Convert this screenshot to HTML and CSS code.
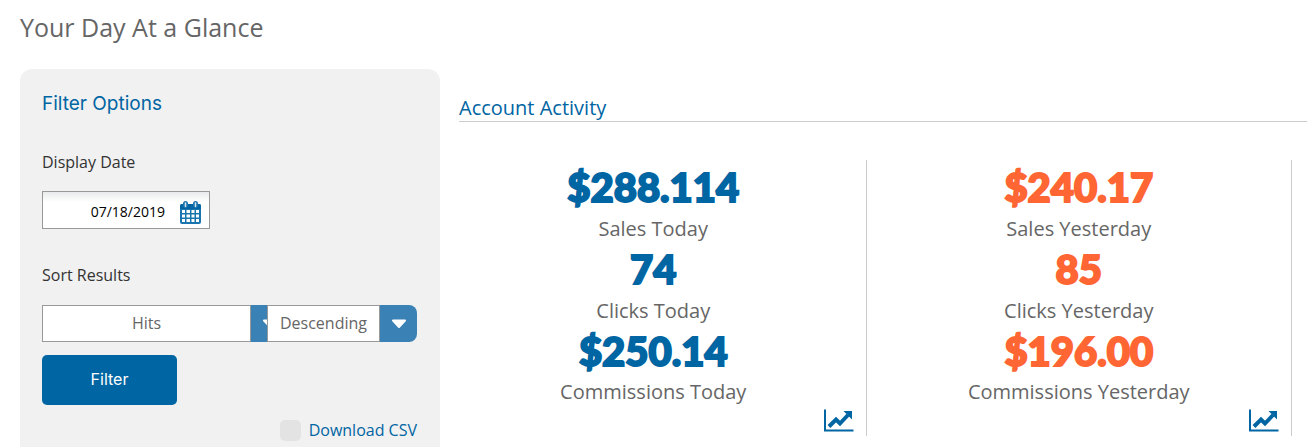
FILE: index.html
```html
<!DOCTYPE html>
<html lang="en">
<head>
<meta charset="utf-8">
<title>Your Day At a Glance</title>
<link rel="stylesheet" href="styles.css">
</head>
<body>
<svg class="sprite" aria-hidden="true">
  <symbol id="icon-chart" viewBox="0 0 30 23">
    <path d="M1 0.5V21.5H29.5" fill="none" stroke="currentColor" stroke-width="2"/>
    <path d="M5 17.500L12 10.500L16 14.500L24 6" fill="none" stroke="currentColor" stroke-width="4"/>
    <path d="M19.500 2H28V10.500Z" fill="currentColor"/>
  </symbol>
</svg>
<h1 class="page-title">Your Day At a Glance</h1>
<div class="layout">
  <form class="filters">
    <h2 class="filters-title">Filter Options</h2>
    <label class="field-label" for="date">Display Date</label>
    <div class="date-field">
      <input class="date-input" id="date" type="text" value="07/18/2019">
      <button class="date-button" type="button" aria-label="Open calendar">
        <svg class="calendar" viewBox="0 0 21 23" aria-hidden="true">
          <path d="M2 3H19Q21 3 21 5V21Q21 23 19 23H2Q0 23 0 21V5Q0 3 2 3Z" fill="#1a74ad"/>
          <path d="M0 5Q0 3 2 3H19Q21 3 21 5V8H0Z" fill="#0065a3"/>
          <rect x="3" y="0" width="5" height="7" rx="2.500" fill="#1a74ad"/>
          <rect x="13" y="0" width="5" height="7" rx="2.500" fill="#1a74ad"/>
          <path d="M5.500 2V5.500M15.500 2V5.500" stroke="#d5e5ef" stroke-width="1.500" stroke-linecap="round"/>
          <path d="M2 9h3v3H2zM6.500 9h3.500v3H6.500zM11.500 9h3v3h-3zM16 9h3v3h-3zM2 13.500h3v3H2zM6.500 13.500h3.500v3H6.500zM11.500 13.500h3v3h-3zM16 13.500h3v3h-3zM2 18h3v3H2zM6.500 18h3.500v3H6.500zM11.500 18h3v3h-3zM16 18h3v3h-3z" fill="#fff"/>
        </svg>
      </button>
    </div>
    <label class="field-label" for="sort">Sort Results</label>
    <div class="sort-row">
      <div class="picker picker-main">
        <select class="picker-select" id="sort"><option>Hits</option></select>
        <span class="picker-arrow"><svg class="triangle" viewBox="0 0 16 10" aria-hidden="true"><path d="M2 1.500H14L8 8Z" fill="#fff" stroke="#fff" stroke-width="2" stroke-linejoin="round"/></svg></span>
      </div>
      <div class="picker picker-order">
        <select class="picker-select" aria-label="Sort order"><option>Descending</option></select>
        <span class="picker-arrow"><svg class="triangle" viewBox="0 0 16 10" aria-hidden="true"><path d="M2 1.500H14L8 8Z" fill="#fff" stroke="#fff" stroke-width="2" stroke-linejoin="round"/></svg></span>
      </div>
    </div>
    <button class="submit" type="submit">Filter</button>
    <label class="download"><input class="download-box" type="checkbox">Download CSV</label>
  </form>
  <main class="activity">
    <h2 class="activity-title">Account Activity</h2>
    <div class="stats">
      <section class="stat-column today">
        <p class="value">$288.114</p><p class="caption">Sales Today</p>
        <p class="value">74</p><p class="caption">Clicks Today</p>
        <p class="value">$250.14</p><p class="caption">Commissions Today</p>
        <a class="chart-link" href="#today" aria-label="Chart for today"><svg class="chart"><use href="#icon-chart"/></svg></a>
      </section>
      <section class="stat-column yesterday">
        <p class="value">$240.17</p><p class="caption">Sales Yesterday</p>
        <p class="value">85</p><p class="caption">Clicks Yesterday</p>
        <p class="value">$196.00</p><p class="caption">Commissions Yesterday</p>
        <a class="chart-link" href="#yesterday" aria-label="Chart for yesterday"><svg class="chart"><use href="#icon-chart"/></svg></a>
      </section>
    </div>
  </main>
</div>
</body>
</html>
```
FILE: styles.css
```css
* { box-sizing: border-box; }
body {
  margin: 0;
  min-height: 100vh;
  display: flex;
  flex-direction: column;
  background: #fff;
  color: #666;
  font-family: "Open Sans", sans-serif;
  font-size: 16px;
}
h1, h2, p { margin: 0; font-weight: 400; }
.sprite { display: none; }
.page-title { padding: 9px 20px 24px; font-size: 25px; line-height: 36px; }
.layout {
  flex: 1;
  display: grid;
  grid-template-columns: 420px 1fr;
  padding-left: 20px;
}
.filters {
  display: flex;
  flex-direction: column;
  align-items: flex-start;
  padding: 23px 23px 0 22px;
  border-radius: 12px 12px 0 0;
  background: #f1f1f1;
}
.filters-title {
  margin-bottom: 33px;
  color: #0065a3;
  font-family: Inter, sans-serif;
  font-size: 19px;
  line-height: 24px;
}
.field-label { margin-bottom: 16px; color: #333; line-height: 26px; }
.date-field {
  display: flex;
  align-items: center;
  width: 168px;
  height: 38px;
  margin-bottom: 33px;
  padding-right: 8px;
  border: 1px solid #999;
  background: linear-gradient(#e8eaeb, #fff 10px);
}
.date-input {
  flex: 1;
  min-width: 0;
  padding: 3px 15px 0 0;
  border: 0;
  background: none;
  color: #000;
  font: inherit;
  font-size: 14px;
  text-align: right;
}
.date-button { padding: 4px 0 0; border: 0; background: none; line-height: 0; }
.calendar { width: 21px; height: 23px; }
.sort-row { display: flex; align-self: stretch; margin: 1px 0 13px; }
.picker { display: flex; height: 37px; overflow: hidden; }
.picker-main { flex: 1; }
.picker-order { width: 150px; border-radius: 0 8px 8px 0; }
.picker-select {
  flex: 1;
  min-width: 0;
  appearance: none;
  padding: 0 0 2px;
  border: 1px solid #999;
  border-radius: 0;
  background: #fff;
  color: #666;
  font: inherit;
  text-align-last: center;
}
.picker-arrow {
  width: 37px;
  padding: 14px 0 0 11px;
  overflow: hidden;
  background: #3a82b5;
  line-height: 0;
}
.picker-main .picker-arrow { width: 16px; }
.triangle { width: 16px; height: 10px; }
.submit {
  width: 135px;
  height: 50px;
  padding: 0 0 2px;
  border: 0;
  border-radius: 5px;
  background: #0065a3;
  color: #fff;
  font-family: Inter, sans-serif;
  font-size: 16px;
}
.download {
  display: flex;
  align-items: center;
  align-self: flex-end;
  gap: 8px;
  margin: 12px 0 4px;
  color: #0065a3;
  line-height: 26px;
}
.download-box {
  appearance: none;
  width: 21px;
  height: 21px;
  margin: 0;
  border-radius: 5px;
  background: #e3e3e3;
}
.activity { padding-top: 25px; }
.activity-title {
  margin: 0 0 38px 19px;
  border-bottom: 1px solid #ccc;
  color: #0065a3;
  font-size: 20px;
  line-height: 27px;
}
.stats { display: grid; grid-template-columns: 1fr 1fr; padding: 0 15px 0 1px; }
.stat-column {
  display: flex;
  flex-direction: column;
  align-items: center;
  padding-top: 4px;
  border-right: 1px solid #ccc;
}
.today { color: #0065a3; }
.yesterday { color: #ff6633; }
.value {
  font-family: Lato, sans-serif;
  font-size: 40px;
  font-weight: 900;
  line-height: 46px;
  -webkit-text-stroke: 2px currentColor;
}
.caption { padding-top: 1px; color: #666; font-size: 20px; line-height: 35px; }
.stat-column .caption:nth-last-child(2) { line-height: 34px; }
.chart-link {
  align-self: flex-end;
  margin: 0 12px 4px;
  color: #0065a3;
  line-height: 0;
}
.chart { width: 30px; height: 23px; }
```
